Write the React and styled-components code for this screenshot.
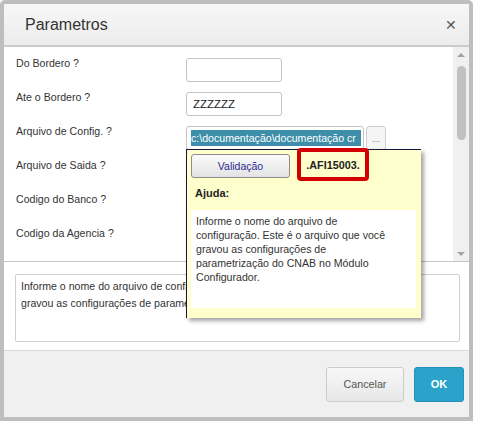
import React from 'react';
import styled, { createGlobalStyle } from 'styled-components';

const GlobalStyle = createGlobalStyle`
  body {
    margin: 0;
    background: #fff;
    font-family: "Liberation Sans", Arial, sans-serif;
  }
`;

const Dialog = styled.div`
  position: relative;
  box-sizing: border-box;
  width: 473px;
  height: 421px;
  border: 4px solid #bebebe;
  border-radius: 5px 5px 0 0;
  display: flex;
  flex-direction: column;
  background: #fff;
  font-size: 10.5px;
  color: #333;
`;

const Header = styled.div`
  flex: none;
  height: 41px;
  display: flex;
  align-items: center;
  justify-content: space-between;
  padding: 0 12px 0 21px;
  background: linear-gradient(#f7f7f7, #ececec);
  border-bottom: 2px solid #cbcbcb;
`;

const Title = styled.h1`
  margin: 0;
  font-size: 16px;
  font-weight: normal;
  color: #333;
`;

const Close = styled.span`
  font-size: 14px;
  color: #555;
  line-height: 1;
`;

const FormArea = styled.div`
  flex: none;
  height: 214px;
  display: flex;
  border-bottom: 1px solid #c6c6c6;
`;

const Fields = styled.div`
  flex: 1;
  padding: 9px 0 0 12px;
  overflow: hidden;
`;

const Row = styled.div`
  display: grid;
  grid-template-columns: 170px auto;
  align-items: start;
  height: 34px;
`;

const Label = styled.span`
  font-size: 10.6px;
  line-height: 14px;
  color: #333;
`;

const InputBox = styled.div`
  box-sizing: border-box;
  margin-top: 2px;
  width: ${(p) => p.$w}px;
  height: 24px;
  border: 1px solid #c4c4c4;
  border-radius: 3px;
  padding: ${(p) => (p.$tight ? '0 2px 0 4px' : '0 6px')};
  display: flex;
  align-items: center;
  font-size: 11.5px;
  color: #222;
  background: #fff;
`;

const InputGroup = styled.div`
  display: flex;
  gap: 2px;
`;

const Selected = styled.span`
  display: block;
  width: 100%;
  overflow: hidden;
  white-space: nowrap;
  background: #3d8ea8;
  color: #fff;
  font-size: 10.6px;
  line-height: 16px;
`;

const Browse = styled.div`
  box-sizing: border-box;
  margin-top: 2px;
  width: 20px;
  height: 24px;
  border: 1px solid #cfcfcf;
  border-radius: 3px;
  background: #f5f5f5;
  color: #777;
  font-size: 9px;
  display: flex;
  align-items: flex-end;
  justify-content: center;
  padding-bottom: 5px;
`;

const Scrollbar = styled.div`
  flex: none;
  width: 16px;
  background: #f0f0f0;
  display: flex;
  flex-direction: column;
  align-items: center;
  padding: 6px 0 5px;
  box-sizing: border-box;
`;

const Arrow = styled.span`
  width: 0;
  height: 0;
  border-left: 4px solid transparent;
  border-right: 4px solid transparent;
  ${(p) =>
    p.$down
      ? 'border-top: 4px solid #a3a3a3; margin-top: auto;'
      : 'border-bottom: 4px solid #a3a3a3;'}
`;

const Thumb = styled.span`
  margin-top: 9px;
  width: 9px;
  height: 74px;
  border-radius: 5px;
  background: #c1c1c1;
`;

const DescSection = styled.div`
  flex: none;
  padding: 12px 9px 8px 11px;
`;

const DescBox = styled.div`
  box-sizing: border-box;
  height: 68px;
  border: 1px solid #cfcfcf;
  border-radius: 2px;
  padding: 3px 5px;
  font-size: 10.6px;
  line-height: 16.5px;
  color: #333;
  overflow: hidden;
`;

const Footer = styled.div`
  flex: 1;
  display: flex;
  justify-content: flex-end;
  align-items: center;
  gap: 10px;
  padding-right: 5px;
  background: #f0f0f0;
  border-top: 1px solid #dadada;
`;

const Button = styled.button`
  box-sizing: border-box;
  height: 35px;
  width: ${(p) => p.$w}px;
  border-radius: 3px;
  font-family: inherit;
  font-size: ${(p) => (p.$primary ? '11px' : '10.7px')};
  font-weight: ${(p) => (p.$primary ? 'bold' : 'normal')};
  color: ${(p) => (p.$primary ? '#fff' : '#555')};
  border: 1px solid ${(p) => (p.$primary ? '#2392b8' : '#cccccc')};
  background: ${(p) =>
    p.$primary ? '#2aa2c9' : 'linear-gradient(#f8f8f8, #e7e7e7)'};
`;

const Popup = styled.div`
  position: absolute;
  left: 182px;
  top: 145px;
  box-sizing: border-box;
  width: 235px;
  height: 169px;
  background: #fffecd;
  border-top: 1px solid #16163a;
  border-left: 1px solid #16163a;
  box-shadow: 3px 3px 4px rgba(0, 0, 0, 0.35);
  padding: 4px 5px 10px 4px;
  display: flex;
  flex-direction: column;
`;

const PopupTop = styled.div`
  display: flex;
  align-items: flex-start;
  gap: 7px;
`;

const ValidButton = styled.div`
  box-sizing: border-box;
  width: 99px;
  height: 24px;
  border: 1px solid #8c8c8c;
  border-radius: 3px;
  background: linear-gradient(#fbfbfb, #e3e3e3);
  color: #2b2b8f;
  font-size: 10.5px;
  display: flex;
  align-items: center;
  justify-content: center;
`;

const Code = styled.div`
  box-sizing: border-box;
  margin-top: -6px;
  width: 72px;
  height: 33px;
  border: 4px solid #d20000;
  border-radius: 4px;
  font-size: 10.8px;
  font-weight: bold;
  color: #222;
  display: flex;
  align-items: center;
  justify-content: center;
`;

const HelpTitle = styled.div`
  margin: 5px 0 0 4px;
  font-size: 11px;
  font-weight: bold;
  line-height: 14px;
  color: #222;
`;

const HelpBox = styled.div`
  flex: 1;
  margin-top: 10px;
  background: #fff;
  padding: 4px 5px;
  font-size: 10.6px;
  line-height: 14px;
  color: #333;
`;

const fields = [
  { label: 'Do Bordero ?', value: '' },
  { label: 'Ate o Bordero ?', value: 'ZZZZZZ' },
  { label: 'Arquivo de Config. ?', file: true },
  { label: 'Arquivo de Saida ?', value: '' },
  { label: 'Codigo do Banco ?', value: '' },
  { label: 'Codigo da Agencia ?', value: '' },
];

export default function App() {
  return (
    <>
      <GlobalStyle />
      <Dialog>
        <Header>
          <Title>Parametros</Title>
          <Close>✕</Close>
        </Header>

        <FormArea>
          <Fields>
            {fields.map((f) => (
              <Row key={f.label}>
                <Label>{f.label}</Label>
                {f.file ? (
                  <InputGroup>
                    <InputBox $w={178} $tight>
                      <Selected>{'c:\\documentação\\documentação cr'}</Selected>
                    </InputBox>
                    <Browse>...</Browse>
                  </InputGroup>
                ) : (
                  <InputBox $w={96}>{f.value}</InputBox>
                )}
              </Row>
            ))}
          </Fields>
          <Scrollbar>
            <Arrow />
            <Thumb />
            <Arrow $down />
          </Scrollbar>
        </FormArea>

        <DescSection>
          <DescBox>
            Informe o nome do arquivo de configuração. Este é o arquivo que você
            <br />
            gravou as configurações de parametrização do CNAB no Módulo Configurador.
          </DescBox>
        </DescSection>

        <Footer>
          <Button $w={78}>Cancelar</Button>
          <Button $w={50} $primary>
            OK
          </Button>
        </Footer>

        <Popup>
          <PopupTop>
            <ValidButton>Validação</ValidButton>
            <Code>.AFI15003.</Code>
          </PopupTop>
          <HelpTitle>Ajuda:</HelpTitle>
          <HelpBox>
            Informe o nome do arquivo de
            <br />
            configuração. Este é o arquivo que você
            <br />
            gravou as configurações de
            <br />
            parametrização do CNAB no Módulo
            <br />
            Configurador.
          </HelpBox>
        </Popup>
      </Dialog>
    </>
  );
}
